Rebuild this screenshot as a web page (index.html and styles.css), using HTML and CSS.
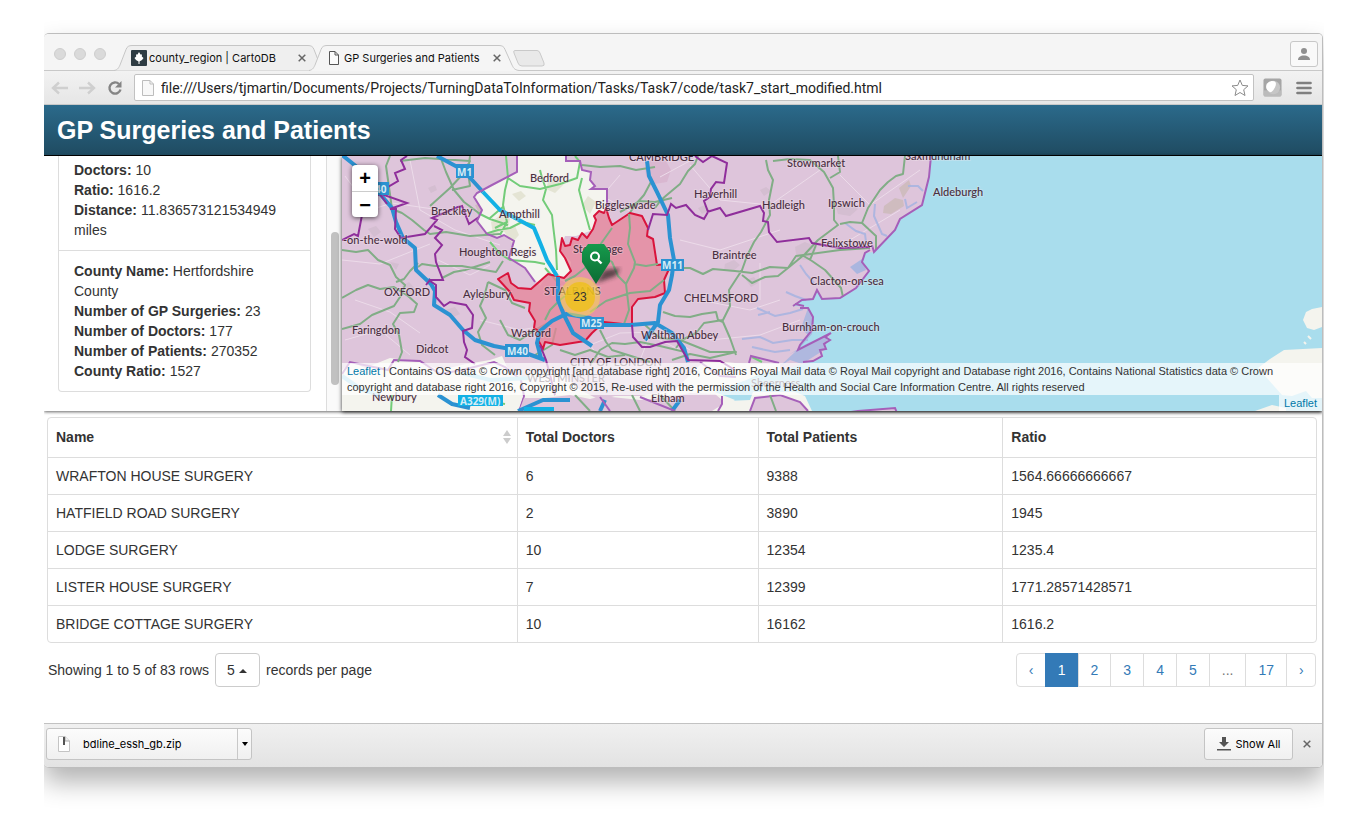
FILE: index.html
```
<!DOCTYPE html>
<html lang="en">
<head>
<meta charset="utf-8">
<title>GP Surgeries and Patients</title>
<link rel="stylesheet" href="styles.css">
</head>
<body>
<div class="stage">
<div class="window">
  <header class="tabstrip">
    <div class="lights"><i></i><i></i><i></i></div>
    <div class="tabs">
      <div class="tab">
        <svg class="tab-shape" viewBox="0 0 212 26" preserveAspectRatio="none"><path d="M0 25.5C4 25 5 22 6 20L12 4.500C13 1.500 15 .5 18 .5H194C197 .5 199 1.500 200 4.500L206 20C207 22 208 25 212 25.500" fill="#efefef" stroke="#c6c6c6"/></svg>
        <svg class="fav" viewBox="0 0 16 16"><rect width="16" height="16" rx="1" fill="#2e3c43"/><path d="M8 2L9.500 4.500 11 4.500 10.800 6.500 12.500 8 11 10 8.500 11.500V14H7.500V11.500L5 10 3.500 8 5.200 6.500 5 4.500H6.500Z" fill="#fff"/></svg>
        <span class="tab-name">county_region | CartoDB</span>
        <button class="close" aria-label="Close tab"><svg viewBox="0 0 8 8"><path d="M.7.7L7.300 7.300M7.300.7L.7 7.300"/></svg></button>
      </div>
      <div class="tab tab-active">
        <svg class="tab-shape" viewBox="0 0 212 26" preserveAspectRatio="none"><path d="M0 25.5C4 25 5 22 6 20L12 4.500C13 1.500 15 .5 18 .5H190C193 .5 195 1.500 196 4.500L203 20C204 22 205 25 210 25.500V26H0Z" fill="#f5f5f5"/><path d="M0 25.500C4 25 5 22 6 20L12 4.500C13 1.500 15 .5 18 .5H190C193 .5 195 1.500 196 4.500L203 20C204 22 205 25 210 25.500" fill="none" stroke="#c6c6c6"/></svg>
        <svg class="fav page" viewBox="0 0 16 16"><path d="M3.500 1.500H9L12.500 5V14.500H3.500ZM9 1.500V5H12.500" fill="#fbfbfb" stroke="#555"/></svg>
        <span class="tab-name">GP Surgeries and Patients</span>
        <button class="close" aria-label="Close tab"><svg viewBox="0 0 8 8"><path d="M.7.7L7.300 7.300M7.300.7L.7 7.300"/></svg></button>
      </div>
    </div>
    <button class="newtab" aria-label="New tab"><svg viewBox="0 0 34 17"><path d="M3 .5H25Q27 .5 28 3L32 13Q33 16 30 16H10Q7 16 6 13L2 3Q1 .5 3 .5Z" fill="#e9e9e9" stroke="#c9c9c9"/></svg></button>
    <button class="person" aria-label="Profile"><svg viewBox="0 0 14 14"><circle cx="7" cy="4" r="3" fill="#8f8f8f"/><path d="M1 13C1 10 3.500 8.500 7 8.500S13 10 13 13Z" fill="#8f8f8f"/></svg></button>
  </header>

  <div class="toolbar">
    <button class="nav" aria-label="Back"><svg viewBox="0 0 18 14"><path d="M17 7H2M8 1.500L2 7L8 12.500" fill="none" stroke="#cfcfcf" stroke-width="2.400"/></svg></button>
    <button class="nav" aria-label="Forward"><svg viewBox="0 0 18 14"><path d="M1 7H16M10 1.500L16 7L10 12.500" fill="none" stroke="#cfcfcf" stroke-width="2.400"/></svg></button>
    <button class="nav reload" aria-label="Reload"><svg viewBox="0 0 16 16"><path d="M13.500 9.500A5.600 5.600 0 1 1 12 4" fill="none" stroke="#858585" stroke-width="2.400"/><path d="M14.500 1V7.500H8Z" fill="#858585"/></svg></button>
    <div class="omnibox">
      <svg class="doc" viewBox="0 0 12 16"><path d="M.5 .5H8L11.500 4V15.500H.5ZM8 .5V4H11.500" fill="#f8f8f8" stroke="#bdbdbd"/></svg>
      <input class="url" type="text" aria-label="Address" value="file:///Users/tjmartin/Documents/Projects/TurningDataToInformation/Tasks/Task7/code/task7_start_modified.html">
      <svg class="star" viewBox="0 0 18 18"><path d="M9 1L11.300 6.400 17 6.900 12.700 10.700 14 16.500 9 13.500 4 16.500 5.300 10.700 1 6.900 6.700 6.400Z" fill="#fff" stroke="#8a8a8a" stroke-linejoin="round"/></svg>
    </div>
    <button class="ext" aria-label="Extension"><svg viewBox="0 0 20 20"><rect x=".5" y=".5" width="19" height="19" rx="2" fill="#a6a6a6"/><rect x="1" y="13" width="18" height="6" fill="#bbb"/><circle cx="11" cy="10" r="7" fill="#c6c6c6"/><path d="M4 6Q7 2 12 3.500Q15 5 12.500 10T7.500 15Q1.500 12 4 6Z" fill="#fff"/></svg></button>
    <button class="menu" aria-label="Menu"><svg viewBox="0 0 16 14"><path d="M1.500 2H14.500M1.500 7H14.500M1.500 12H14.500" stroke="#7f7f7f" stroke-width="2.700" stroke-linecap="round"/></svg></button>
  </div>

  <h1 class="title">GP Surgeries and Patients</h1>

  <main>
  <div class="upper">
    <aside class="side">
      <ul class="facts">
        <li class="fact"><b>Doctors:</b> 10<br><b>Ratio:</b> 1616.2<br><b>Distance:</b> 11.836573121534949 miles</li>
        <li class="fact"><b>County Name:</b> Hertfordshire County<br><b>Number of GP Surgeries:</b> 23<br><b>Number of Doctors:</b> 177<br><b>Number of Patients:</b> 270352<br><b>County Ratio:</b> 1527</li>
      </ul>
    </aside>
    <div class="track"><div class="thumb"></div></div>
    <section class="map" aria-label="Map">
      <svg class="canvas" viewBox="342 156 980 255" preserveAspectRatio="xMinYMin slice">
        <defs><linearGradient id="pin" x1="0" x2="0" y1="0" y2="1"><stop offset="0" stop-color="#169a4c"/><stop offset="1" stop-color="#0b6b33"/></linearGradient>
        <filter id="soft"><feGaussianBlur stdDeviation="2"/></filter></defs>
        <rect x="342" y="156" width="980" height="255" fill="#dec5db"/>
        <!-- urban and woodland patches -->
        <g fill="#cdb9c9" opacity=".6">
          <path d="M368 229l8-3 5 6-7 5zM428 188l7-3 2 5-6 3zM460 250l9-2 3 6-9 4zM402 286l7-4 7 8-5 7-8-3zM390 262l9 2-3 6zM380 330l6-4 5 4-7 6zM445 310l10-3 5 7-9 4zM725 264l9-4 6 5-8 7-8-2zM746 280l8-3 4 6-7 4zM698 208l7-3 5 5-8 4zM795 247l10-5 12 5-7 13-13-1zM836 207l13-5 9 7-8 7-12-2zM760 190l6-3 5 4-7 5zM718 297l5-4 11 3-5 9-10-1z"/>
          <path d="M645 166l8-8 13 3 5 9-4 12-13 2-8-8z" fill="#d6adc9"/>
        </g>
        <g fill="#c2b5a8" opacity=".55"><path d="M884 206l11-8 8 2 1 6-13 8-8-1zM899 188l10-8 2 6-8 12zM475 205l9-2 4 7-9 3z"/></g>
        <g fill="none" stroke="#ecdbe9" stroke-width="1">
          <path d="M345 176L370 210 392 203 440 210M410 160L420 210 455 230 500 245M342 260L380 264 430 244M355 300L390 312 420 333M438 260L470 275 490 265M480 320L520 330 550 325M620 175L602 196 630 211M690 165L720 200 770 205 820 170M680 240L720 250 780 230M700 300L750 310 780 300M640 360L650 335 680 350M840 175L870 205 920 170M800 320L760 335 710 340M605 365L590 345 620 333 660 332 690 350M345 340L380 330 410 355M660 177L710 150M760 263L760 300M850 240L900 210"/>
        </g>
        <!-- Bedfordshire -->
        <path class="rural" d="M517 156H566V161H580L582 170 591 172 590 180 595 186 591 189H607V206L604 213H598L594 228 590 231 576 236H565L560 250 571 262 570 275 566 283 548 274 540 286 525 268 509 258 514 241 504 235 497 238 487 234 477 221 482 210 474 197 477 193 492 185 517 172Z"/>
        <g fill="#e4e4d4"><path d="M491 222l14-10 5 7-3 12-14 3zM548 182l9-5 7 7-9 9-9-4zM512 194l9-3 5 5-7 5zM503 230l12-4 4 9-7 8zM582 205l6-9 8 6-6 12z"/></g>
        <!-- southern districts -->
        <path class="rural" d="M342 370L352 362 365 368 390 358 420 362 440 370 466 364 490 360 502 356 507 367 523 378 535 372 560 372 580 390 600 400 615 396 640 396 675 390 705 360 735 363 780 364V411H342Z"/>
        <path class="county" d="M342 374L350 362 388 370 394 360 420 361 440 374 462 370 494 362 505 367 521 380 524 396 519 411"/>
        <path d="M519 411L524 398 545 398 570 395 590 399 602 396 640 400 672 397 690 393 715 394 722 400 721 411Z" fill="#dec5db"/>
        <path class="rural" d="M430 400L500 395 523 396 518 411H430Z"/>
        <!-- sea -->
        <path class="sea" d="M931 156L929 177 922 205 900 219 895 230 874 252 865 253 862 262 869 271 856 288 840 298 822 299 817 290 813 299 802 300 793 306 808 307 813 317 812 330 800 345 798 350 831 333 825 345 822 355 813 361 803 364 785 370 762 375 735 384 715 392 735 400 720 411H1322V156Z"/>
        <path class="sea" d="M735 385L760 374 800 370V392L740 397Z"/>
        <path class="rural" d="M712 411L728 401 750 400 753 392 795 392 805 396 812 411Z"/>
        <path class="county" d="M750 411L755 398 780 395 800 402 808 411M830 415L858 411 895 408 897 413" style="fill:#dec5db"/>
        <path d="M808 308L814 318 812 334 798 350 790 354 806 344 829 334 824 350 802 364 790 360 780 366 795 352 808 335 801 328Z" fill="#aab6df" opacity=".9"/>
        <g fill="none" stroke="#a8b4e0" stroke-width="3" opacity=".9"><path d="M757 308L775 316 790 313 803 309M742 339L760 337 773 343 792 340 808 340M752 347L775 352 790 350M758 315L770 312M875 204L874 216 882 234 887 236M905 199L907 208 917 202M908 186L918 186 923 191M845 223L856 231 865 234 866 242M800 265L806 274 814 283M786 292L795 296 806 300" stroke-width="2"/></g>
        <path d="M850 267L862 259 866 270 857 274Z" fill="#aab6df"/>
        <!-- continental coast -->
        <path class="rural" d="M1322 307L1312 309 1306 312 1303 320 1307 328 1314 330 1322 327ZM1284 350L1322 348V398L1312 398 1306 391 1292 396 1282 395 1258 368 1270 359ZM1255 411L1272 405 1286 408V411Z"/>
        <path class="rural" d="M1304 342l2 2M1308 336l3 3" style="stroke:#f4f4ee;stroke-width:2"/>

        <!-- A roads over counties -->
        <g class="aroad">
          <path d="M400 161L425 158 470 161 462 175 450 188 430 206M440 156L446 172 454 190 464 202 480 214M470 156L468 172 470 186 452 190M390 156L386 166 388 180 392 209 402 213 412 220 424 230 430 234 446 232 470 236 500 234M342 250L356 252 368 250 378 260 390 265 396 277 405 285 402 294 394 306 372 315 360 324 342 329M418 267L422 264 435 266 462 266 484 270 496 272 503 261M396 282L404 279 410 271 418 263M342 298L356 290 368 285 380 289 394 287 408 296 417 304 414 312 400 313 393 324 399 335 402 352 398 362M488 282L484 297 480 306 486 318 478 332 482 345 495 355M488 282L505 290 512 303 525 308M442 278L454 272 465 270 490 262M500 320L508 335 520 340 535 330 550 322M556 328L552 345 535 355"/>
          <path d="M582 165L600 167 620 166 636 170 655 167M652 180L644 195 636 204 629 214M655 208L661 200 668 194 680 184 688 171 695 164 698 156M766 160L768 170 773 180 769 200 770 215 761 232 754 242 747 256 742 270 729 290 730 306 722 322M672 198L655 202 640 201 620 212M773 161L790 159 810 160 824 172 833 188 834 205 834 220 838 225 826 234 818 240 805 254 788 268 770 267 752 273 735 271 724 270 713 269 703 274 690 268 678 268M788 268L778 276 765 277 752 283 742 275M802 255L812 261 825 270 834 280 841 288 843 297M840 224L850 222 862 223 876 236 876 250M862 223L868 208 880 190 888 182 896 176 903 174 905 156M838 156L840 172 830 178M663 312L675 316 690 317 702 314 716 312 718 320 723 322 730 338 736 355M723 320L704 323 696 333 682 340 676 348M816 245L810 260M788 268L796 256 840 250 870 248M645 325L660 338 680 340 710 352 736 352 710 358 690 354 672 360"/>
          <path d="M590 365L600 350 612 343 625 344 640 342 660 346 685 352M600 330L606 342 612 350 650 362M560 350L575 355 590 350 608 357 625 355M632 395L640 411M660 395L675 411M575 395L590 411M770 395L776 411"/>
        </g>
        <g class="aroad bright"><path d="M506 156L508 178 505 190 503 205 507 222 500 235M508 178L520 186 540 189 560 184 577 178 580 162 575 156M540 170L542 178 546 189 543 200 552 215 553 225 556 250 557 270M478 213L490 219 508 225M507 222L495 228M485 234L498 230 510 228 522 222 535 225M504 206L490 218M490 242L500 254 510 260 535 262 545 264M560 285L545 268M582 178L579 190 583 205 590 230M392 395L391 411M480 400L505 404M752 357L762 362"/></g>
        <path class="water" d="M342 376L362 390 380 395M462 373L490 380 530 378"/>

        <!-- Hertfordshire selection -->
        <path d="M498 279L508 273 511 283 518 288 531 289 548 274 564 278 571 271 565 258 560 251 562 238 565 246 570 245 572 238 578 240 582 233 587 238 593 229 596 220 594 216 599 211 604 213 606 208 609 218 612 225 630 213 642 216 648 228 647 236 653 239 657 265 667 264 669 269 664 280 665 293 655 297 638 299 632 307V325L604 322 592 333 585 341 560 345 545 342 543 349 537 338 540 332 534 328 535 321 529 311 530 303 514 300 510 292Z" fill="#e68398" fill-opacity=".75" stroke="#d9143c" stroke-width="2" stroke-linejoin="round"/>
        <path class="aroad" d="M629 214L630 228 628 244 635 262 634 268 626 284 629 310 624 324M565 281L575 276 585 268 590 255 600 245 612 228M634 264L646 266 658 264M590 312L606 301 630 293 650 291 664 280M598 244L602 255 612 262 618 276 626 284M545 320L550 310 560 300 570 292"/>

        <!-- motorways -->
        <g class="mway">
          <path d="M342 155L357 167M375 188L392 208 396 222 403 238 415 248 416 270 432 285M428 279L435 291 434 305 450 315 463 330 475 340 494 346 520 351 545 360M437 156L463 170 483 192M647 161L649 176 657 192 668 215 670 238 674 260 672 275 669 290 660 305 658 322 645 340M541 358L537 343 540 331 552 321 566 314 590 318 604 325 630 325 655 323 672 333 684 348 688 362M558 277V300L564 315 573 333 592 346M518 411L543 400 570 400M672 411L680 400M438 395L452 404 470 408M600 411L605 400"/>
          <path class="cyan" d="M483 192L500 210 517 219 534 228 541 245 547 260 557 276"/>
        </g>
        <!-- county lines -->
        <path class="county dark" d="M407 156L401 160 405 169 395 173 398 181 388 187 384 195 407 203 390 209 396 209 395 229 401 238 425 234 437 220 432 218 458 207 462 206 469 224 479 217M434 226L442 230 435 238 442 245 435 254 436 262 443 280 430 280 426 285M342 240L354 234 358 236 362 215M375 197L380 194 387 204M430 281L436 285 436 297 444 306 450 302 466 305 473 315 472 328 463 331 464 342 467 350 465 357 475 364M540 345L546 360 550 375 555 395M695 156L703 162 712 156 727 163 724 183 716 182 711 189 710 197 704 201 708 212 704 219 695 215 686 205 676 208 671 204 667 215 653 214 648 230M707 212L720 208 726 216 760 206 764 213 763 221 768 222 769 232 777 242 809 238 812 243 840 248 870 247M632 325L633 337 642 347 650 347 665 342 677 341 688 360 720 361 735 370"/>
        <path class="county" d="M517 156V172L492 185 477 193 474 197 482 210 477 221 487 234 497 238 504 235 514 241 509 258 525 268 535 282M566 156V161H580L582 170 591 172 590 180 595 186 591 189H607V206M931 156L929 177 922 205 900 219 895 230 874 252 872 245M870 250L865 253 862 262 869 271 856 288 840 298 822 299 817 290 813 299 802 300 793 306M795 304L804 306M800 308H808L813 317 812 330 800 345 798 350 831 333 825 337 830 340 824 344 826 349 820 350 822 356 813 361 803 362M779 363L751 356 749 363M700 362L720 376 736 377M600 397L610 411M640 397L675 411M722 396L722 404 718 411"/>

        <!-- road shields -->
        <g class="shields">
          <rect x="456" y="164" width="18" height="14"/><rect x="368" y="182" width="21" height="13"/><rect x="661" y="259" width="23" height="12"/><rect x="580" y="317" width="24" height="12"/><rect x="505" y="344" width="24" height="13"/><rect class="bright-shield" x="458" y="395" width="45" height="11"/><rect class="bright-shield" x="524" y="407" width="30" height="6"/>
          <text x="457" y="176">M1</text><text x="375" y="193">40</text><text x="662" y="269">M11</text><text x="581" y="327">M25</text><text x="507" y="355">M40</text><text x="460" y="405">A329(M)</text>
        </g>
        <g class="places">
          <text x="629" y="161">CAMBRIDGE</text><text x="787" y="167">Stowmarket</text><text x="905" y="160">Saxmundham</text><text x="530" y="182">Bedford</text><text x="933" y="196">Aldeburgh</text><text x="694" y="198">Haverhill</text><text x="762" y="209">Hadleigh</text><text x="828" y="207">Ipswich</text><text x="595" y="209">Biggleswade</text><text x="431" y="215">Brackley</text><text x="499" y="218">Ampthill</text><text x="343" y="244">-on-the-wold</text><text x="459" y="256">Houghton Regis</text><text x="573" y="253">Stevenage</text><text x="712" y="259">Braintree</text><text x="821" y="247">Felixstowe</text><text x="810" y="285">Clacton-on-sea</text><text x="384" y="296">OXFORD</text><text x="463" y="298">Aylesbury</text><text x="544" y="295">ST ALBANS</text><text x="684" y="302">CHELMSFORD</text><text x="352" y="334">Faringdon</text><text x="416" y="353">Didcot</text><text x="511" y="337">Watford</text><text x="641" y="339">Waltham Abbey</text><text x="782" y="331">Burnham-on-crouch</text><text x="570" y="366">CITY OF LONDON</text><text x="527" y="382">WESTMINSTER</text><text x="751" y="387">Sheerness</text><text x="372" y="401">Newbury</text><text x="651" y="402">Eltham</text>
        </g>
        <!-- cluster and search pin -->
        <circle cx="580" cy="297" r="20" fill="#f1d357" fill-opacity=".6"/><circle cx="580" cy="297" r="15" fill="#f0c20c" fill-opacity=".7"/>
        <text class="count" x="580" y="301" text-anchor="middle">23</text>
        <path d="M596 283L604 270 620 268 616 276Z" fill="#222" opacity=".7" filter="url(#soft)"/>
        <path d="M588 244H604L610 252V262L596 284 582 262V252Z" fill="url(#pin)"/>
        <circle cx="595" cy="256.500" r="4" fill="none" stroke="#fff" stroke-width="2"/><path d="M597.500 259.500L601.500 263.500" stroke="#fff" stroke-width="2.400"/>
      </svg>
      <div class="zoom"><button aria-label="Zoom in">+</button><button aria-label="Zoom out">−</button></div>
      <div class="credits">
        <p class="credit"><a href="#leaflet">Leaflet</a> | Contains OS data © Crown copyright [and database right] 2016, Contains Royal Mail data © Royal Mail copyright and Database right 2016, Contains National Statistics data © Crown copyright and database right 2016, Copyright © 2015, Re-used with the permission of the Health and Social Care Information Centre. All rights reserved</p>
        <p class="credit-short"><a href="#leaflet">Leaflet</a></p>
      </div>
    </section>
  </div>

  <section class="lower">
    <div class="grid">
    <table>
      <colgroup><col class="c1"><col class="c2"><col class="c3"><col class="c4"></colgroup>
      <thead><tr><th><span class="sort">Name<svg viewBox="0 0 8 14"><path d="M4 0L8 6H0ZM0 8H8L4 14Z" fill="#ccc"/></svg></span></th><th>Total Doctors</th><th>Total Patients</th><th>Ratio</th></tr></thead>
      <tbody>
        <tr><td>WRAFTON HOUSE SURGERY</td><td>6</td><td>9388</td><td>1564.66666666667</td></tr>
        <tr><td>HATFIELD ROAD SURGERY</td><td>2</td><td>3890</td><td>1945</td></tr>
        <tr><td>LODGE SURGERY</td><td>10</td><td>12354</td><td>1235.4</td></tr>
        <tr><td>LISTER HOUSE SURGERY</td><td>7</td><td>12399</td><td>1771.28571428571</td></tr>
        <tr><td>BRIDGE COTTAGE SURGERY</td><td>10</td><td>16162</td><td>1616.2</td></tr>
      </tbody>
    </table>
    </div>
    <div class="pager">
      <div class="rows"><span>Showing 1 to 5 of 83 rows</span>
        <span class="pick"><select id="size" class="size"><option>5</option><option>10</option><option>25</option></select><svg viewBox="0 0 8 4"><path d="M0 4L4 0L8 4Z" fill="#333"/></svg></span>
        <label for="size">records per page</label></div>
      <nav class="pages" aria-label="Pages"><a class="step" href="#prev">‹</a><a class="on" href="#1">1</a><a href="#2">2</a><a href="#3">3</a><a href="#4">4</a><a href="#5">5</a><span>...</span><a href="#17">17</a><a class="step" href="#next">›</a></nav>
    </div>
  </section>
  </main>

  <footer class="shelf">
    <div class="item">
      <button class="file"><svg viewBox="0 0 12 16"><path d="M.5 .5H7L11.500 5V15.500H.5Z" fill="#fff" stroke="#c4c4c4"/><path d="M7 .5V5H11.500" fill="#eee" stroke="#aaa"/><path d="M5 1H7V9H5Z" fill="#555"/></svg>bdline_essh_gb.zip</button>
      <button class="more" aria-label="Download options"><svg viewBox="0 0 6 4"><path d="M0 0H6L3 4Z"/></svg></button>
    </div>
    <div class="shelf-right">
      <button class="all"><svg viewBox="0 0 14 14"><path d="M5 0H9V5H12L7 10 2 5H5ZM0 12H14V13.500H0Z" fill="#555"/></svg>Show All</button>
      <button class="close" aria-label="Close downloads"><svg viewBox="0 0 8 8"><path d="M.7.7L7.300 7.300M7.300.7L.7 7.300"/></svg></button>
    </div>
  </footer>
</div>
</div>
</body>
</html>
```
FILE: styles.css
```
* { box-sizing: border-box; }
body { margin: 0; background: #fff; color: #333; font: 14px/20px "Liberation Sans", Arial, sans-serif; }
button { border: 0; padding: 0; background: none; font: inherit; color: inherit; display: flex; align-items: center; justify-content: center; }
svg { display: block; }
a { text-decoration: none; }

.stage { margin: 0 40px 0 44px; padding: 33px 1px 49px 0; overflow: hidden; }
.window { border: 1px solid #bdbdbd; border-left: 0; border-radius: 5px; background: #fff; overflow: hidden; box-shadow: 0 14px 26px rgba(0, 0, 0, .3); }

.tabstrip { height: 37px; display: flex; align-items: flex-end; background: #f5f5f5; box-shadow: inset 0 -1px #c8c8c8; padding-right: 4px; font: 12px/16px Inter, sans-serif; color: #111; }
.lights { display: flex; gap: 8px; padding: 0 8px 11px 10px; }
.lights i { width: 12px; height: 12px; border-radius: 50%; background: #dadada; border: 1px solid #cecece; }
.tabs { display: flex; }
.tab { position: relative; width: 212px; height: 26px; display: flex; align-items: center; gap: 2px; padding: 0 20px 0 17px; }
.tab + .tab { margin-left: -17px; }
.tab > * { position: relative; }
.tab .tab-shape { position: absolute; left: 0; top: 0; width: 100%; height: 100%; }
.fav { width: 16px; height: 16px; flex: none; }
.tab-name { flex: 1; white-space: nowrap; font-size: 11px; }
.close { width: 8px; height: 16px; }
.close svg { width: 8px; height: 8px; fill: none; stroke: #666; stroke-width: 1.500; }
.newtab { width: 34px; height: 17px; margin: 0 0 4px -9px; }
.newtab svg { width: 34px; height: 17px; }
.person { margin: 0 0 4px auto; width: 28px; height: 26px; border: 1px solid #c8c8c8; border-radius: 3px; background: #f9f9f9; }
.person svg { width: 14px; height: 14px; }

.toolbar { height: 34px; display: flex; align-items: center; padding: 0 10px 0 7px; background: linear-gradient(#f2f2f2, #e6e6e6); border-bottom: 1px solid #c8c8c8; }
.nav { width: 18px; margin-right: 9px; }
.nav svg { width: 18px; height: 14px; }
.reload { margin: 0 10px 0 1px; }
.reload svg { width: 16px; height: 16px; }
.omnibox { flex: 1; height: 27px; display: flex; align-items: center; gap: 7px; padding: 0 4px 0 7px; background: #fff; border: 1px solid #c2c2c2; border-radius: 2px; }
.doc { width: 12px; height: 16px; }
.url { flex: 1; min-width: 0; border: 0; padding: 0; outline: 0; background: none; color: #222; font: 14px/20px Roboto, sans-serif; }
.star { width: 18px; height: 18px; }
.ext { margin: 0 14px 0 9px; }
.ext svg { width: 19px; height: 19px; }
.menu svg { width: 16px; height: 14px; }

.title { margin: 0; padding: 10px 13px; font-size: 25px; line-height: 30px; font-weight: bold; color: #fff; background: linear-gradient(#2b6a8b, #1f4b61); border-bottom: 1px solid #000; }

.upper { display: flex; position: relative; box-shadow: 0 1px 3px rgba(0, 0, 0, .6); }
.side { width: 283px; flex: none; padding: 0 15px 19px 14px; border-right: 1px solid #ddd; }
.facts { list-style: none; margin: 0; padding: 0; border: 1px solid #ddd; border-top: 0; border-radius: 0 0 4px 4px; }
.fact { padding: 10px 15px; }
.fact:first-child { padding-top: 4px; border-bottom: 1px solid #ddd; }
.track { width: 15px; flex: none; background: #fafafa; padding: 76px 3px 26px 4px; display: flex; }
.thumb { flex: 1; border-radius: 4px; background: #c1c1c1; }
.map { flex: 1; position: relative; overflow: hidden; background: #a9dded; box-shadow: 0 1px 4px rgba(0, 0, 0, .8); }
.canvas { position: absolute; left: 0; top: 0; width: 100%; height: 100%; }
.rural { fill: #f4f4ee; }
.sea { fill: #a9dded; }
.aroad { fill: none; stroke: #81ad86; stroke-width: 2; stroke-linejoin: round; }
.bright { stroke: #73cc79; }
.mway { fill: none; stroke: #2b92d2; stroke-width: 4; stroke-linejoin: round; }
.cyan { stroke: #13b1e5; }
.water { fill: none; stroke: #9fd9ed; stroke-width: 4; }
.county { fill: none; stroke: #a55fb9; stroke-width: 2; }
.dark { stroke: #8f2e9b; }
.shields rect { fill: #2b92d2; }
.shields .bright-shield { fill: #13b1e5; }
.shields text { font: bold 10px "Noto Sans", sans-serif; fill: #d6ecf5; }
.places text { font: 500 11px Lato, sans-serif; fill: #4a2f40; paint-order: stroke; stroke: #f2e8ee; stroke-opacity: .3; stroke-width: 2; }
.count { font: 12px "Liberation Sans", Arial, sans-serif; fill: #333; }
.zoom { position: absolute; left: 10px; top: 9px; width: 26px; border-radius: 4px; background: #fff; box-shadow: 0 1px 5px rgba(0, 0, 0, .65); }
.zoom button { width: 26px; height: 26px; font: bold 20px/26px "Liberation Sans", Arial, sans-serif; color: #000; }
.zoom button + button { border-top: 1px solid #ccc; }
.credits { position: absolute; left: 0; right: 0; bottom: 0; display: flex; flex-direction: column; align-items: flex-end; font-size: 11px; line-height: 16px; }
.credits a { color: #0078a8; }
.credits p { margin: 0; padding: 0 5px; background: rgba(255, 255, 255, .7); }

.lower { padding: 6px 5px 36px 3px; }
.grid { border: 1px solid #ddd; border-radius: 4px; overflow: hidden; }
table { width: 100%; table-layout: fixed; border-collapse: collapse; }
.c1 { width: 37%; }
.c2 { width: 19%; }
.c3 { width: 19.3%; }
th, td { text-align: left; padding: 8px; border-top: 1px solid #ddd; border-left: 1px solid #ddd; }
th { border-top: 0; padding: 9px 8px 10px; }
th:first-child, td:first-child { border-left: 0; }
.sort { display: flex; justify-content: space-between; align-items: center; }
.sort svg { width: 8px; height: 14px; margin-right: -2px; }
.pager { display: flex; justify-content: space-between; align-items: center; padding-top: 10px; }
.rows { display: flex; align-items: center; gap: 6px; padding-left: 1px; }
.pick { position: relative; display: block; }
.size { display: block; width: 45px; height: 34px; padding: 0 11px; border: 1px solid #ccc; border-radius: 4px; background: #fff; color: #333; font: inherit; appearance: none; }
.pick svg { position: absolute; right: 13px; top: 16px; width: 8px; height: 4px; }
.pages { display: flex; padding-right: 1px; }
.pages > * { padding: 6px 12px; border: 1px solid #ddd; margin-left: -1px; color: #337ab7; }
.pages > .step { width: 30px; }
.pages > :first-child { border-radius: 4px 0 0 4px; }
.pages > :last-child { border-radius: 0 4px 4px 0; }
.pages span { color: #777; }
.pages .on { background: #337ab7; border-color: #337ab7; color: #fff; }

.shelf { height: 44px; display: flex; justify-content: space-between; align-items: center; padding: 0 11px 3px 2px; border-top: 1px solid #c2c2c2; background: linear-gradient(#f0f0f0, #e3e3e3); font: 11px/16px Inter, sans-serif; color: #000; }
.item, .all { height: 32px; border: 1px solid #c4c4c4; border-radius: 3px; background: linear-gradient(#fcfcfc, #f0f0f0); }
.item { display: flex; width: 206px; }
.file { flex: 1; justify-content: flex-start; gap: 13px; padding-left: 11px; }
.file svg { width: 12px; height: 16px; }
.more { width: 14px; border-left: 1px solid #c8c8c8; }
.more svg { width: 6px; height: 4px; }
.shelf-right { display: flex; align-items: center; gap: 10px; }
.all { width: 89px; gap: 5px; }
.all svg { width: 14px; height: 14px; }
```
